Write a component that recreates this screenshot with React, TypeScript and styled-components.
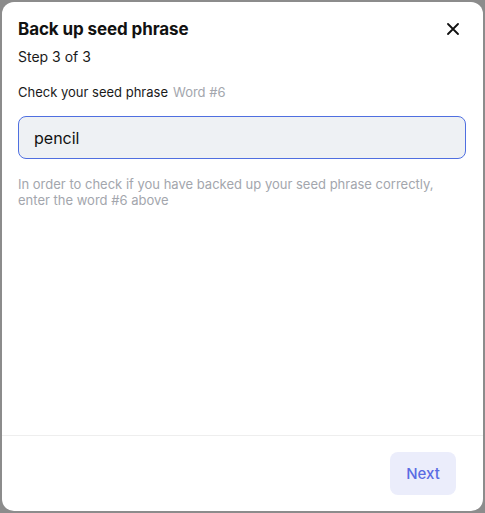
import React from "react";
import styled, { createGlobalStyle } from "styled-components";

const GlobalStyle = createGlobalStyle`
  html, body {
    margin: 0;
    padding: 0;
    background: #8c8c8c;
  }
  body {
    font-family: Inter, "Noto Sans", sans-serif;
  }
`;

const Backdrop = styled.div`
  width: 485px;
  height: 513px;
  padding: 2px;
  box-sizing: border-box;
  display: flex;
`;

const Dialog = styled.div`
  flex: 1;
  background: #ffffff;
  border-radius: 12px;
  display: flex;
  flex-direction: column;
  overflow: hidden;
`;

const Body = styled.div`
  flex: 1;
  padding: 16px 17px 0 16px;
  display: flex;
  flex-direction: column;
`;

const Header = styled.div`
  display: flex;
  align-items: center;
  justify-content: space-between;
  height: 22px;
`;

const Title = styled.h2`
  margin: 0;
  font-size: 17px;
  font-weight: 700;
  color: #111111;
  letter-spacing: -0.1px;
`;

const CloseButton = styled.button`
  border: none;
  background: none;
  padding: 0;
  width: 20px;
  height: 20px;
  display: flex;
  align-items: center;
  justify-content: center;
  margin-right: 3px;
  color: #111111;
  cursor: pointer;
`;

const Step = styled.div`
  margin-top: 8px;
  font-size: 14px;
  color: #1a1a1a;
`;

const Label = styled.div`
  margin-top: 19px;
  font-size: 13px;
  color: #1a1a1a;
  display: flex;
  gap: 5px;
`;

const Hint = styled.span`
  color: #a3a6ad;
`;

const WordInput = styled.input`
  margin-top: 16px;
  height: 43px;
  box-sizing: border-box;
  width: 100%;
  border: 1px solid #4f6fe0;
  border-radius: 8px;
  background: #eef1f4;
  padding: 0 15px;
  font-family: inherit;
  font-size: 16px;
  color: #111111;
  outline: none;
`;

const Helper = styled.p`
  margin: 17px 0 0;
  font-size: 13px;
  line-height: 16px;
  color: #a3a6ad;
`;

const Footer = styled.div`
  border-top: 1px solid #eeeeee;
  height: 75px;
  padding: 0 27px 0 16px;
  display: flex;
  align-items: center;
  justify-content: flex-end;
`;

const NextButton = styled.button`
  width: 66px;
  height: 43px;
  border: none;
  border-radius: 8px;
  background: #ebedfb;
  color: #5a6be3;
  font-family: inherit;
  font-size: 15px;
  font-weight: 500;
  cursor: pointer;
`;

const App = () => {
  return (
    <>
      <GlobalStyle />
      <Backdrop>
        <Dialog>
          <Body>
            <Header>
              <Title>Back up seed phrase</Title>
              <CloseButton aria-label="Close">
                <svg width="12" height="12" viewBox="0 0 12 12">
                  <path
                    d="M1 1 L11 11 M11 1 L1 11"
                    stroke="currentColor"
                    strokeWidth="1.8"
                    strokeLinecap="round"
                  />
                </svg>
              </CloseButton>
            </Header>
            <Step>Step 3 of 3</Step>
            <Label>
              Check your seed phrase <Hint>Word #6</Hint>
            </Label>
            <WordInput defaultValue="pencil" />
            <Helper>
              In order to check if you have backed up your seed phrase correctly,
              enter the word #6 above
            </Helper>
          </Body>
          <Footer>
            <NextButton>Next</NextButton>
          </Footer>
        </Dialog>
      </Backdrop>
    </>
  );
};

export default App;
